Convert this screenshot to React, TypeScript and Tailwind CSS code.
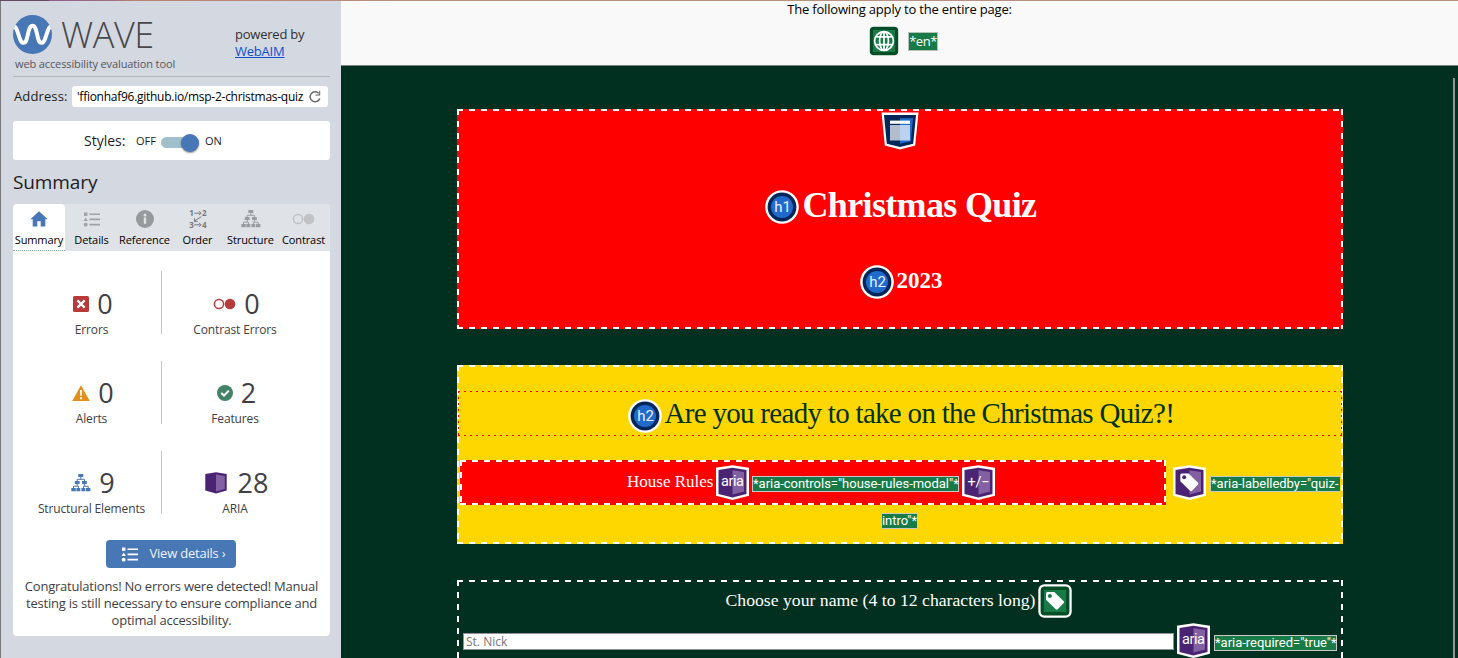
import React from "react";

const SHIELD = "M2 3.5 L17.5 1.2 L33 3.5 L33 30 L17.5 34 L2 30 Z";

const DASHES =
  "bg-[repeating-linear-gradient(90deg,#fff_0px,#fff_6px,transparent_6px,transparent_12px),repeating-linear-gradient(90deg,#fff_0px,#fff_6px,transparent_6px,transparent_12px),repeating-linear-gradient(180deg,#fff_0px,#fff_6px,transparent_6px,transparent_12px),repeating-linear-gradient(180deg,#fff_0px,#fff_6px,transparent_6px,transparent_12px)] bg-[length:100%_2px,100%_2px,2px_100%,2px_100%] bg-[position:top,bottom,left,right] bg-no-repeat p-0.5";

const OPEN_DASHES =
  "bg-[repeating-linear-gradient(90deg,#fff_0px,#fff_6px,transparent_6px,transparent_12px),repeating-linear-gradient(180deg,#fff_0px,#fff_6px,transparent_6px,transparent_12px),repeating-linear-gradient(180deg,#fff_0px,#fff_6px,transparent_6px,transparent_12px)] bg-[length:100%_2px,2px_100%,2px_100%] bg-[position:top,left,right] bg-no-repeat px-0.5 pt-0.5";

const RED_DOTS =
  "bg-[repeating-linear-gradient(90deg,#f00_0px,#f00_2px,transparent_2px,transparent_6px),repeating-linear-gradient(90deg,#f00_0px,#f00_2px,transparent_2px,transparent_6px),repeating-linear-gradient(180deg,#f00_0px,#f00_2px,transparent_2px,transparent_6px),repeating-linear-gradient(180deg,#f00_0px,#f00_2px,transparent_2px,transparent_6px)] bg-[length:100%_1px,100%_1px,1px_100%,1px_100%] bg-[position:top,bottom,left,right] bg-no-repeat";

function AriaBadge({ kind }: { kind: "aria" | "toggle" | "tag" }) {
  return (
    <svg width="35" height="36" viewBox="0 0 35 36" className="shrink-0">
      <path d={SHIELD} fill="#fff" stroke="#fff" strokeWidth="2" />
      <path d="M3.5 5 L17.5 2.8 L31.5 5 L31.5 29 L17.5 32.6 L3.5 29 Z" fill="#4a2472" />
      <path d="M17.5 5.2 L29 7 L29 26.6 L17.5 29.6 Z" fill="#8260a1" />
      {kind === "tag" ? (
        <TagShape x={8} y={8} hole="#4a2472" />
      ) : (
        <text
          x="17.5"
          y={kind === "aria" ? 21 : 22}
          textAnchor="middle"
          fill="#fff"
          fontSize="14.5"
          fontFamily="Roboto, sans-serif"
          textLength={kind === "aria" ? 23 : 22}
        >
          {kind === "aria" ? "aria" : "+/−"}
        </text>
      )}
    </svg>
  );
}

function TagShape({ x, y, hole }: { x: number; y: number; hole: string }) {
  return (
    <g transform={`translate(${x} ${y})`}>
      <path d="M0.3 2 Q0.3 0.5 1.8 0.5 L8.6 0.5 L18 9.7 Q18.8 10.6 18 11.5 L12 17.7 Q11 18.6 10 17.7 L0.3 8.2 Z" fill="#fff" />
      <circle cx="4.2" cy="4.3" r="2" fill={hole} />
    </g>
  );
}

function HeadingBadge({ label }: { label: string }) {
  return (
    <svg width="34" height="34" viewBox="0 0 34 34" className="shrink-0">
      <circle cx="17" cy="17" r="16.8" fill="#fff" />
      <circle cx="17" cy="17" r="14.4" fill="#00265a" />
      <circle cx="17" cy="17" r="11" fill="#1f6acb" />
      <text x="17.5" y="22.3" textAnchor="middle" fill="#e9f1ff" fontSize="15" fontFamily="Roboto, sans-serif">
        {label}
      </text>
    </svg>
  );
}

function GreenTag() {
  return (
    <svg width="34" height="34" viewBox="0 0 34 34" className="shrink-0">
      <rect x="0.3" y="0.3" width="33.4" height="33.4" rx="6" fill="#fff" />
      <rect x="2.6" y="2.6" width="28.8" height="28.8" rx="4" fill="#004d26" />
      <rect x="6" y="6" width="22" height="22" fill="#187b47" />
      <TagShape x={7.7} y={7.6} hole="#187b47" />
    </svg>
  );
}

function GlobeBadge() {
  return (
    <svg width="30" height="30" viewBox="0 0 30 30" className="shrink-0">
      <rect width="30" height="30" rx="6" fill="#fff" />
      <rect x="0.8" y="0.8" width="28.4" height="28.4" rx="4" fill="#004d26" />
      <rect x="4" y="4" width="22" height="22" fill="#187b47" />
      <g fill="none" stroke="#fff" strokeWidth="1.7">
        <circle cx="15" cy="15" r="9.4" />
        <ellipse cx="15" cy="15" rx="4.4" ry="9.4" />
        <path d="M15 5.6V24.4M7.2 10.8H22.8M7.2 18.6H22.8" />
      </g>
    </svg>
  );
}

function HeaderBadge() {
  return (
    <svg width="38" height="39" viewBox="0 0 38 39" className="-ml-px">
      <path d="M0.5 1.5H37.5L34.2 34.4L19 38.5L3.8 34.4Z" fill="#fff" />
      <path d="M3 4H35L32.2 32.7L19 36L5.8 32.7Z" fill="#00265a" />
      <path d="M19 7.2H32L29.8 30.2L19 32.8Z" fill="#1f6acb" />
      <rect x="9" y="9.6" width="20" height="3.2" fill="#fff" />
      <rect x="9" y="14" width="10" height="15.5" fill="#b1bdcd" />
      <rect x="19" y="14" width="10" height="15.5" fill="#bcd2ef" />
    </svg>
  );
}

function Annotation({ children, className = "" }: { children: React.ReactNode; className?: string }) {
  return (
    <span
      className={`whitespace-nowrap border border-[#c8c8c8] bg-[#187b47] font-['Roboto',sans-serif] text-[13px] leading-[14px] tracking-[-0.02px] text-white ${className}`}
    >
      {children}
    </span>
  );
}

function ListGlyph({ color }: { color: string }) {
  return (
    <svg width="18" height="15" viewBox="0 0 18 15" fill={color}>
      <rect x="1" y="0.5" width="3.4" height="3.4" />
      <path d="M2.7 5.4L4.8 9H0.6Z" />
      <circle cx="2.7" cy="12.7" r="1.9" />
      <path d="M6.5 1.4H17V3H6.5zM6.5 6.6H17V8.2H6.5zM6.5 11.8H17V13.4H6.5z" />
    </svg>
  );
}

function TreeGlyph({ color }: { color: string }) {
  return (
    <svg width="20" height="18" viewBox="0 0 20 18">
      <g fill={color}>
        <path d="M7.3 0H12.3V3H7.3zM3.8 7H8.6V10H3.8zM11 7H15.8V10H11zM0.3 14H4.8V17.2H0.3zM5.4 14H9.3V17.2H5.4zM10.4 14H14.3V17.2H10.4zM15 14H19.4V17.2H15z" />
      </g>
      <path
        d="M9.8 3V5.3M6.2 7V5.3H13.4V7M6.2 10V12.2M2.5 14V12.2H7.4V14M13.4 10V12.2M12.4 14V12.2H17.2V14"
        fill="none"
        stroke={color}
        strokeWidth="1"
      />
    </svg>
  );
}

function HomeGlyph() {
  return (
    <svg width="18" height="16" viewBox="0 0 18 16">
      <path d="M9 0.3L17.7 8.2H15.3V15.5H10.7V10.3H7.3V15.5H2.7V8.2H0.3Z" fill="#4877b6" />
    </svg>
  );
}

function InfoGlyph() {
  return (
    <svg width="18" height="18" viewBox="0 0 18 18">
      <circle cx="9" cy="9" r="9" fill="#979a9c" />
      <circle cx="9" cy="5" r="1.5" fill="#dfe2e7" />
      <rect x="7.8" y="7.4" width="2.4" height="6.4" fill="#dfe2e7" />
    </svg>
  );
}

function OrderGlyph() {
  return (
    <svg width="22" height="24" viewBox="-2 -3 22 24">
      <g fill="#77797c" fontSize="8" fontWeight="700" fontFamily="'Open Sans', sans-serif">
        <text x="0.2" y="6">1</text>
        <text x="13" y="6">2</text>
        <text x="0.2" y="17.6">3</text>
        <text x="13" y="17.6">4</text>
      </g>
      <path
        d="M5.3 3.2H12M10 1.2L12 3.2L10 5.2M5.3 14.8H12M10 12.8L12 14.8L10 16.8M12.3 6.6L5 11.4M5.4 8.2V11.4H8.6"
        fill="none"
        stroke="#77797c"
        strokeWidth="1"
      />
    </svg>
  );
}

function ContrastGlyph({ color }: { color: string }) {
  return (
    <svg width="23" height="12" viewBox="0 0 23 12">
      <circle cx="6" cy="6" r="4.6" fill="none" stroke={color} strokeWidth="1.5" />
      <circle cx="17" cy="6" r="5.3" fill={color} />
    </svg>
  );
}

const tabs = [
  { label: "Summary", icon: <HomeGlyph />, active: true },
  { label: "Details", icon: <ListGlyph color="#a0a3a6" />, active: false },
  { label: "Reference", icon: <InfoGlyph />, active: false },
  { label: "Order", icon: <OrderGlyph />, active: false },
  { label: "Structure", icon: <TreeGlyph color="#9a9da0" />, active: false },
  { label: "Contrast", icon: <ContrastGlyph color="#c0c2c5" />, active: false },
];

const stats = [
  [
    {
      label: "Errors",
      value: "0",
      icon: (
        <svg width="16" height="16" viewBox="0 0 16 16">
          <rect width="16" height="16" rx="1.5" fill="#b93a3a" />
          <path d="M4.4 4.4L11.6 11.6M11.6 4.4L4.4 11.6" stroke="#fff" strokeWidth="2.2" />
        </svg>
      ),
    },
    { label: "Contrast Errors", value: "0", icon: <ContrastGlyph color="#b93a3a" /> },
  ],
  [
    {
      label: "Alerts",
      value: "0",
      icon: (
        <svg width="18" height="16" viewBox="0 0 18 16">
          <path d="M9 0.3L17.8 16H0.2Z" fill="#e38f1c" />
          <path d="M8 5H10L9.7 11H8.3ZM8 12.2H10V14.2H8Z" fill="#fff" />
        </svg>
      ),
    },
    {
      label: "Features",
      value: "2",
      icon: (
        <svg width="16" height="16" viewBox="0 0 16 16">
          <circle cx="8" cy="8" r="8" fill="#448466" />
          <path d="M4.2 8L7 10.6L11.8 5.6" fill="none" stroke="#fff" strokeWidth="2" />
        </svg>
      ),
    },
  ],
  [
    { label: "Structural Elements", value: "9", icon: <TreeGlyph color="#4877b6" /> },
    {
      label: "ARIA",
      value: "28",
      icon: (
        <svg width="22" height="22" viewBox="0 0 22 22" className="mr-[3px]">
          <path d="M0.3 2L11 0.3L21.7 2V18.6L11 21.5L0.3 18.6Z" fill="#4a2472" />
          <path d="M11 2.5L19.8 4V17L11 19.6Z" fill="#8260a1" />
        </svg>
      ),
    },
  ],
];

function Sidebar() {
  return (
    <aside className="flex w-[341px] shrink-0 flex-col border-l border-[#77797c] bg-[#d4d8e0] pl-3 pr-[11px] font-['Open_Sans',sans-serif] text-[#1c1c1e]">
      <header className="flex h-[76px] border-b border-[#b0b6b8] pt-[13px]">
        <div className="flex w-[222px] flex-col">
          <div className="flex h-10 items-center">
            <svg width="39" height="39" viewBox="0 0 39 39">
              <clipPath id="logo"><circle cx="19.5" cy="19.5" r="19.5" /></clipPath>
              <circle cx="19.5" cy="19.5" r="19.5" fill="#4877b6" />
              <path
                d="M-1 10.5C5.5 9 5.2 27.8 10.5 27.8C15.8 27.8 14 10.8 19.5 10.8C25 10.8 23.2 27.8 28.5 27.8C33.8 27.8 33.5 9 40 10.5"
                fill="none"
                stroke="#fff"
                strokeWidth="4"
                clipPath="url(#logo)"
              />
            </svg>
            <span className="ml-[9px] mt-0.5 text-[36px] font-light leading-10 tracking-[-0.4px] text-[#48484c]">WAVE</span>
          </div>
          <span className="ml-0.5 whitespace-nowrap text-[11px] leading-5 tracking-[-0.12px] text-[#55565a]">
            web accessibility evaluation tool
          </span>
        </div>
        <p className="whitespace-nowrap pt-3 text-[13px] leading-[17px] tracking-[-0.22px] text-[#303034]">
          powered by
          <br />
          <a className="text-[#0b50d0] underline">WebAIM</a>
        </p>
      </header>
      <div className="mt-[9px] flex h-[21px] items-center">
        <span className="ml-px w-[58px] text-[13px] tracking-[0.12px]">Address:</span>
        <div className="flex h-[21px] w-[256px] items-center rounded-[3px] bg-white pl-[5px]">
          <span className="w-[227px] whitespace-nowrap text-[12px] tracking-[-0.27px] text-black">
            'ffionhaf96.github.io/msp-2-christmas-quiz
          </span>
          <svg width="14" height="14" viewBox="0 0 14 14" className="ml-1">
            <path d="M10.6 3.2A5 5 0 1 0 11.8 8.4" fill="none" stroke="#606060" strokeWidth="1.4" />
            <path d="M12.2 0.8V5.6H7.4V4.6H11.2V0.8Z" fill="#606060" />
          </svg>
        </div>
      </div>
      <div className="mt-3.5 flex h-[39px] items-center rounded-[3px] bg-white pl-[71px]">
        <span className="w-[52px] text-[14px]">Styles:</span>
        <span className="w-[25px] pt-0.5 text-[11px]">OFF</span>
        <span className="mr-1.5 mt-1 flex h-[11px] w-[38px] items-center justify-end rounded-full bg-[#a0c1cc]">
          <span className="h-[18px] w-[18px] shrink-0 rounded-full bg-[#4877b6] shadow-[0_1px_2px_rgba(0,0,0,0.45)]" />
        </span>
        <span className="pt-0.5 text-[11px]">ON</span>
      </div>
      <h2 className="mt-2.5 h-[34px] text-[19px] leading-6 tracking-[-0.1px]">Summary</h2>
      <section className="flex h-[432px] flex-col rounded-[4px] bg-white">
        <nav className="flex h-[47px] shrink-0 overflow-hidden rounded-t-[4px] bg-[#dfe2e7] text-[11px] tracking-[-0.1px] text-black">
          {tabs.map((tab) => (
            <div
              key={tab.label}
              className={
                tab.active
                  ? "flex w-[52px] flex-col items-center rounded-t-[4px] border-b border-dotted border-[#80a8c0] bg-white"
                  : "flex w-[53px] flex-col items-center"
              }
            >
              <span className="flex h-7 items-center pt-0.5">{tab.icon}</span>
              <span className="whitespace-nowrap leading-4">{tab.label}</span>
            </div>
          ))}
        </nav>
        {stats.map((row, i) => (
          <div key={i} className="flex h-[90px] pt-5 text-[#404045]">
            {row.map((stat, j) => (
              <div
                key={stat.label}
                className={
                  j === 0
                    ? "flex h-[63px] w-[149px] flex-col items-center border-r border-[#c4c5c8] pr-0 pl-[9px]"
                    : "flex h-[63px] w-[146px] flex-col items-center"
                }
              >
                <div className={i === 0 ? "mt-[15px] flex h-9 items-center gap-2 pl-[3px]" : "mt-3.5 flex h-9 items-center gap-2 pl-[3px]"}>
                  {stat.icon}
                  <span className="text-[27px] leading-9">{stat.value}</span>
                </div>
                <span className="whitespace-nowrap text-[12px] leading-4 tracking-[-0.14px]">{stat.label}</span>
              </div>
            ))}
          </div>
        ))}
        <div className="mr-0.5 mt-[19px] flex h-7 w-[130px] items-center gap-[11px] self-center rounded-[4px] bg-[#4877b6] pl-[15px] text-[13px] tracking-[-0.22px] text-[#eef4fc]">
          <ListGlyph color="#fff" />
          <span className="whitespace-nowrap">View details ›</span>
        </div>
        <p className="mt-2.5 whitespace-nowrap text-center text-[13px] leading-[17px] tracking-[-0.22px] text-[#404045]">
          Congratulations! No errors were detected! Manual
          <br />
          testing is still necessary to ensure compliance and
          <br />
          optimal accessibility.
        </p>
      </section>
    </aside>
  );
}

function Page() {
  return (
    <main className="flex min-w-0 flex-1 flex-col bg-[#023020] font-['Liberation_Serif',serif]">
      <header className="flex h-[65px] shrink-0 flex-col items-center border-b border-[#7b837f] bg-[#f9f9f9] font-['Open_Sans',sans-serif] text-[13px] tracking-[-0.18px] text-black">
        <p className="h-[25px] leading-[17px]">The following apply to the entire page:</p>
        <div className="ml-2 flex items-center gap-[9px]">
          <GlobeBadge />
          <span className="border border-[#b9c0b9] bg-[#187b47] leading-[17px] tracking-[-0.5px] text-white">*en*</span>
        </div>
      </header>
      <div className="flex flex-1">
        <div className="ml-[116px] flex w-[886px] flex-col pt-[43px]">
          <section className={`flex h-[220px] shrink-0 flex-col items-center bg-[#ff0000] text-white ${DASHES}`}>
            <HeaderBadge />
            <h1 className="ml-px mt-[37px] flex h-10 items-center gap-1">
              <HeadingBadge label="h1" />
              <span className="w-[234px] whitespace-nowrap pb-1 text-[36px] font-bold leading-9 tracking-[-0.65px]">
                Christmas Quiz
              </span>
            </h1>
            <h2 className="ml-0.5 mt-[35px] flex h-10 items-center gap-[3px]">
              <HeadingBadge label="h2" />
              <span className="whitespace-nowrap pb-0.5 text-[23px] font-bold leading-9">2023</span>
            </h2>
          </section>
          <section className={`mt-9 flex h-[179px] shrink-0 flex-col bg-[#ffd700] ${DASHES}`}>
            <h2 className={`-mx-px mt-6 flex h-[45px] shrink-0 items-center justify-center gap-[3px] pl-0.5 pt-1 text-[#023020] ${RED_DOTS}`}>
              <HeadingBadge label="h2" />
              <span className="w-[510px] whitespace-nowrap pb-1.5 text-[29px] leading-9 tracking-[-0.7px]">
                Are you ready to take on the Christmas Quiz?!
              </span>
            </h2>
            <div className="mt-6 flex h-[45px] shrink-0 items-center pl-px">
              <div className={`flex h-[45px] w-[706px] items-center justify-center bg-[#ff0000] text-white ${DASHES}`}>
                <span className="w-[88px] whitespace-nowrap pb-0.5 text-[17px] leading-5">House Rules</span>
                <AriaBadge kind="aria" />
                <Annotation className="mx-[2px] mt-0.5 w-[207px]">*aria-controls="house-rules-modal"*</Annotation>
                <AriaBadge kind="toggle" />
                <span className="w-[3px]" />
              </div>
              <div className="ml-1.5 flex items-center gap-[3px]">
                <AriaBadge kind="tag" />
                <Annotation className="mt-0.5 w-[130px] border-r-0">*aria-labelledby="quiz-</Annotation>
              </div>
            </div>
            <Annotation className="mt-2 self-center border-l-0">intro"*</Annotation>
          </section>
          <section className={`mt-9 flex h-[78px] flex-col ${OPEN_DASHES}`}>
            <label className="flex h-[38px] shrink-0 items-center justify-center gap-[3px] pr-0.5 text-white">
              <span className="whitespace-nowrap pb-0.5 text-[17.7px] leading-6">Choose your name (4 to 12 characters long)</span>
              <GreenTag />
            </label>
            <div className="flex h-9 shrink-0 items-start gap-0.5 pl-1 pt-[3px]">
              <div className="mt-2.5 flex h-[17px] w-[711px] shrink-0 items-center border border-[#8f8f9d] bg-white pl-0.5 font-['Open_Sans',sans-serif] text-[12px] leading-none text-[#757575]">
                St. Nick
              </div>
              <AriaBadge kind="aria" />
              <Annotation className="ml-px mt-3 w-[123px]">*aria-required="true"*</Annotation>
            </div>
          </section>
        </div>
        <div className="ml-[110px] mt-3 w-0.5 bg-[#8f9693]" />
      </div>
    </main>
  );
}

export default function App() {
  return (
    <div className="flex h-[658px] w-[1458px] flex-col overflow-hidden">
      <div className="h-px shrink-0 bg-[linear-gradient(90deg,#624a60_0px,#624a60_48px,#905990_50px,#a07080_110px,#bd8070_136px,#b89080_400px,#b89080_100%)]" />
      <div className="flex min-h-0 flex-1">
        <Sidebar />
        <Page />
      </div>
    </div>
  );
}
